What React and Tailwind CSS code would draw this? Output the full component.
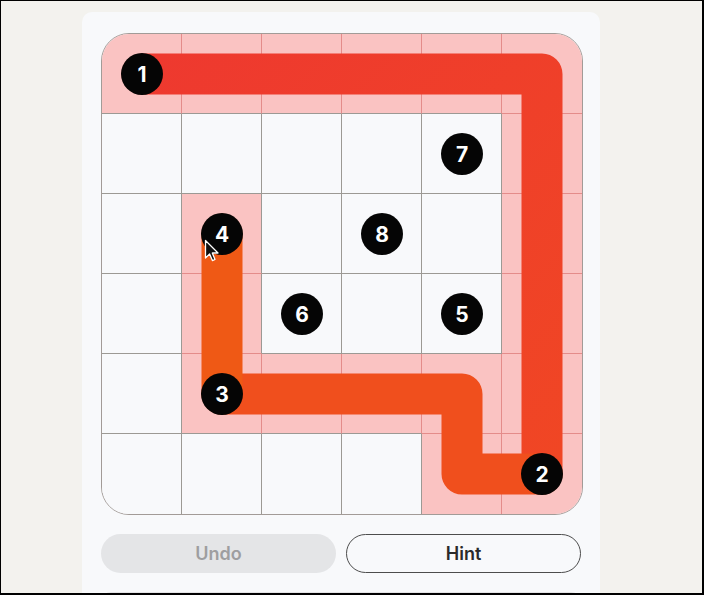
import React from "react";

const PINK = [
  "111111",
  "000001",
  "010001",
  "010001",
  "011111",
  "000011",
].map((r) => r.split("").map((c) => c === "1"));

const NUMS = [
  { n: 1, r: 0, c: 0 },
  { n: 7, r: 1, c: 4 },
  { n: 4, r: 2, c: 1 },
  { n: 8, r: 2, c: 3 },
  { n: 6, r: 3, c: 2 },
  { n: 5, r: 3, c: 4 },
  { n: 3, r: 4, c: 1 },
  { n: 2, r: 5, c: 5 },
];

const ctr = (i) => 40 + 80 * i;

function Cell({ r, c }) {
  const pink = PINK[r][c];
  const right = c < 5 ? (pink && PINK[r][c + 1] ? "border-r-[1.5px] border-r-[#e48c8a]" : "border-r-[1.5px] border-r-[#9c9994]") : "";
  const bottom = r < 5 ? (pink && PINK[r + 1][c] ? "border-b-[1.5px] border-b-[#e48c8a]" : "border-b-[1.5px] border-b-[#9c9994]") : "";
  return <div className={`h-[80px] ${pink ? "bg-[#fac3c2]" : "bg-[#f8f9fb]"} ${right} ${bottom}`} />;
}

function Board() {
  const cells = [];
  for (let r = 0; r < 6; r++) for (let c = 0; c < 6; c++) cells.push(<Cell key={`${r}-${c}`} r={r} c={c} />);
  return (
    <div className="relative w-[482px] h-[482px]">
      <div className="grid grid-cols-[repeat(6,80px)] border-[1.5px] border-[#a29b97] rounded-[28px] overflow-hidden">
        {cells}
      </div>
      <svg className="absolute left-px top-px" width="480" height="480" viewBox="0 0 480 480">
        <defs>
          <linearGradient id="g1" x1="40" y1="40" x2="440" y2="440" gradientUnits="userSpaceOnUse">
            <stop offset="0" stopColor="#ee392f" />
            <stop offset="1" stopColor="#f04624" />
          </linearGradient>
        </defs>
        <path d="M40 40 H440 V440" fill="none" stroke="url(#g1)" strokeWidth="41" strokeLinejoin="round" strokeLinecap="round" />
        <path d="M440 440 H360 V360 H120" fill="none" stroke="#f04f1d" strokeWidth="41" strokeLinejoin="round" strokeLinecap="round" />
        <path d="M120 360 V200" fill="none" stroke="#ef5915" strokeWidth="41" strokeLinejoin="round" strokeLinecap="round" />
        {NUMS.map(({ n, r, c }) => (
          <g key={n}>
            <circle cx={ctr(c)} cy={ctr(r)} r="21" fill="#050505" />
            <text
              x={ctr(c)}
              y={ctr(r) + 7.5}
              textAnchor="middle"
              fill="#ffffff"
              fontSize="21"
              fontWeight="700"
              fontFamily="Inter, 'Liberation Sans', sans-serif"
            >
              {n}
            </text>
          </g>
        ))}
      </svg>
      {/* mouse pointer */}
      <svg className="absolute left-[103px] top-[206px]" width="16" height="24" viewBox="0 0 16 24">
        <path d="M1.5 1.5 V19 L5.6 15 L8.4 21.6 L11 20.5 L8.3 14 H14 Z" fill="#111" stroke="#fff" strokeWidth="1.3" strokeLinejoin="round" />
      </svg>
    </div>
  );
}

export default function App() {
  return (
    <div className="w-[704px] h-[595px] overflow-hidden bg-[#f3f2ee] border-t border-l border-r-2 border-b-2 border-black" style={{ fontFamily: "Inter, 'Liberation Sans', sans-serif" }}>
      <div className="ml-[81px] mt-[11px] w-[518px] bg-[#f8f9fb] rounded-[10px] px-[19px] pt-[21px] pb-6">
        <Board />
        <div className="mt-[19px] flex gap-[10px]">
          <button className="w-[236px] h-[39px] rounded-full bg-[#e4e5e7] text-[#9e9ea0] text-[18px] font-semibold">Undo</button>
          <button className="w-[236px] h-[39px] rounded-full border border-[#4d4d4d] text-[#2a2a2a] text-[18px] font-semibold">Hint</button>
        </div>
        <div className="mt-[19px] h-[40px] rounded-[10px] border border-[#e3e3e5]" />
      </div>
    </div>
  );
}
